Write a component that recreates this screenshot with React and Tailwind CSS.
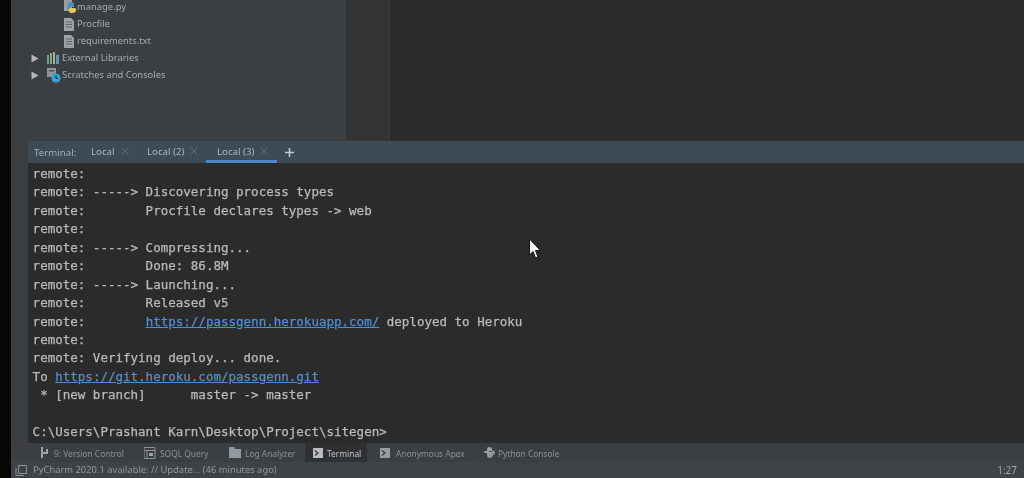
import React from "react";

const PyIcon = () => (
  <svg width="14" height="14" viewBox="0 0 14 14" className="shrink-0">
    <rect x="1" y="0" width="8" height="11" fill="#9a9fa3" />
    <path d="M5 4 Q5 2 8 2 Q11 2 11 4 V7 H7 V8 H11 Q13 8 13 10 Q13 13 9 13 Q6 13 6 11 V9 H4 Z" fill="#4b8fc4" />
    <path d="M7 8 H12 Q13 8 13 10 Q13 13 9 13 Q6 13 6 11 V9 Z" fill="#e6c84e" />
  </svg>
);
const FileIcon = () => (
  <svg width="10" height="13" viewBox="0 0 10 13" className="shrink-0">
    <path d="M0 0H7L10 3V13H0Z" fill="#9ea2a5" />
    <path d="M2 4H8M2 6.5H8M2 9H8" stroke="#62676a" strokeWidth="1" />
  </svg>
);
const Arrow = () => (
  <svg width="8" height="9" viewBox="0 0 8 9" className="shrink-0">
    <path d="M0.5 0.5L7.5 4.5L0.5 8.5Z" fill="#b4b8ba" />
  </svg>
);
const LibIcon = () => (
  <svg width="13" height="12" viewBox="0 0 13 12" className="shrink-0">
    <rect x="0" y="3" width="2" height="9" fill="#6f9aa8" />
    <rect x="3" y="1" width="2" height="11" fill="#7fb069" />
    <rect x="6" y="0" width="2" height="12" fill="#9fb0a0" />
    <rect x="9" y="3" width="3" height="9" fill="#5d95b8" />
  </svg>
);
const ScratchIcon = () => (
  <svg width="14" height="15" viewBox="0 0 14 15" className="shrink-0">
    <rect x="0" y="0" width="9" height="9" fill="#8f9498" />
    <rect x="2" y="2" width="5" height="1.5" fill="#4b5054" />
    <circle cx="9" cy="10" r="4.6" fill="#2fa3d6" />
    <path d="M9 7.5V10.5H11" stroke="#123" strokeWidth="1" fill="none" />
  </svg>
);
const Close = () => (
  <svg width="8" height="8" viewBox="0 0 8 8" className="shrink-0">
    <path d="M0.5 0.5L7.5 7.5M7.5 0.5L0.5 7.5" stroke="#5f6a72" strokeWidth="1" />
  </svg>
);
const Plus = () => (
  <svg width="9" height="9" viewBox="0 0 9 9">
    <path d="M4.5 0V9M0 4.5H9" stroke="#c4c8cb" strokeWidth="1.6" />
  </svg>
);
const Branch = () => (
  <svg width="11" height="11" viewBox="0 0 11 11" className="shrink-0">
    <path d="M2 0V11M2 6H7V2" stroke="#a0a4a7" strokeWidth="2" fill="none" />
  </svg>
);
const Soql = () => (
  <svg width="12" height="12" viewBox="0 0 12 12" className="shrink-0">
    <path d="M0 0.5H11V11.5H0ZM0 3.5H11M3 3.5V11.5" stroke="#8e9396" fill="none" />
    <path d="M5 6H9V9H5Z" fill="#8fa9bb" />
  </svg>
);
const Folder = () => (
  <svg width="12" height="11" viewBox="0 0 12 11" className="shrink-0">
    <path d="M0 0H5L6 2H12V11H0Z" fill="#8f9aa3" />
  </svg>
);
const Term = ({ bright }) => (
  <svg width="10" height="10" viewBox="0 0 10 10" className="shrink-0">
    <rect width="10" height="10" fill={bright ? "#b8bcbe" : "#9a9ea1"} />
    <path d="M2 2.5L5 5L2 7.5" stroke="#333" strokeWidth="1.2" fill="none" />
  </svg>
);
const Snake = () => (
  <svg width="11" height="11" viewBox="0 0 11 11" className="shrink-0">
    <path d="M3 4V2Q3 0 5.5 0Q8 0 8 2V4H5V5H8V8H3V6H1Q0 6 0 4.5Q0 4 1 4Z" fill="#9aa0a4" />
    <path d="M8 3.5H10Q11 4 11 6Q11 7.5 9 7.5V9Q8 11 5.5 11Q3 11 3 9V7.5H8Z" fill="#8b9196" />
  </svg>
);

const Tab = ({ label, active, w }) => (
  <div className={`flex items-center gap-[6px] h-full pl-[11px] border-b-[3px] ${active ? "border-[#4a88c7]" : "border-transparent"} ${w}`}>
    <span className="text-[9.7px] text-[#b0b5b8] pt-[4px]">{label}</span>
    <Close />
  </div>
);

const Tool = ({ icon, label, active, w, pad, gap }) => (
  <div className={`flex items-center h-full ${pad} ${gap} ${w} ${active ? "bg-[#2e3031] text-[#c4c6c8]" : "text-[#8d9194]"}`}>
    {icon}
    <span className="text-[8.4px] whitespace-nowrap pt-[3px]">{label}</span>
  </div>
);

const lines = [
  "remote:",
  "remote: -----> Discovering process types",
  "remote:        Procfile declares types -> web",
  "remote:",
  "remote: -----> Compressing...",
  "remote:        Done: 86.8M",
  "remote: -----> Launching...",
  "remote:        Released v5",
  <>remote:        <span className="text-[#4f8fd6] underline">https://passgenn.herokuapp.com/</span> deployed to Heroku</>,
  "remote:",
  "remote: Verifying deploy... done.",
  <>To <span className="text-[#4f8fd6] underline">https://git.heroku.com/passgenn.git</span></>,
  " * [new branch]      master -> master",
  " ",
  "C:\\Users\\Prashant Karn\\Desktop\\Project\\sitegen>",
];

export default function App() {
  return (
    <div className="flex w-[1024px] h-[478px] overflow-hidden bg-[#060606] font-['Noto_Sans','Open_Sans',sans-serif] blur-[0.5px]">
      <div className="w-[11px] shrink-0" />
      <div className="flex-1 flex flex-col min-w-0">
        <div className="flex h-[141px] shrink-0">
          <div className="w-[17px] bg-[#3b3e40]" />
          <div className="w-[318px] bg-[#3c3f41] flex flex-col text-[9.4px] text-[#a6aaad] relative">
            <div className="flex items-center h-[17px] pl-[35px] -mt-[1.5px]"><PyIcon /><span>manage.py</span></div>
            <div className="flex items-center gap-[3px] h-[17px] pl-[36px]"><FileIcon /><span>Procfile</span></div>
            <div className="flex items-center gap-[3px] h-[17px] pl-[36px]"><FileIcon /><span>requirements.txt</span></div>
            <div className="flex items-center h-[17px] pl-[3px] gap-[8px]"><Arrow /><LibIcon /><span className="-ml-[7px] pl-[1px]">External Libraries</span></div>
            <div className="flex items-center h-[17px] pl-[3px] gap-[8px]"><Arrow /><ScratchIcon /><span className="-ml-[8px] pl-[1px]">Scratches and Consoles</span></div>
          </div>
          <div className="w-[44px] bg-[#323436] border-r border-[#3a3c3e]" />
          <div className="flex-1 bg-[#2b2b2b]" />
        </div>
        <div className="flex flex-1 min-h-0">
          <div className="w-[17px] bg-[#3b3e40] shrink-0" />
          <div className="flex-1 flex flex-col min-w-0">
            <div className="h-[22px] shrink-0 bg-[#3d4b56] flex items-center pl-[6px]">
              <span className="text-[9.7px] text-[#a9aeb1] w-[46px] pt-[2px]">Terminal:</span>
              <Tab label="Local" w="w-[56px]" />
              <Tab label="Local (2)" w="w-[70px]" />
              <Tab label="Local (3)" active w="w-[71px]" />
              <div className="ml-[8px] flex items-center"><Plus /></div>
            </div>
            <div className="h-[280px] shrink-0 bg-[#2b2b2b] pl-[4.6px] pt-[2px] font-['DejaVu_Sans_Mono',monospace] text-[12.52px] leading-[18.45px] text-[#b9bbbb] [-webkit-text-stroke:0.25px] whitespace-pre">
              {lines.map((l, i) => (
                <div key={i} className="h-[18.45px]">{l}</div>
              ))}
            </div>
          </div>
        </div>
        <div className="h-[19px] shrink-0 bg-[#3c3f41] flex items-center pl-[24px]">
          <Tool icon={<Branch />} label="9: Version Control" w="w-[104px]" pad="pl-[5px]" gap="gap-[3px]" />
          <Tool icon={<Soql />} label="SOQL Query" w="w-[85px]" pad="pl-[5px]" gap="gap-[4px]" />
          <Tool icon={<Folder />} label="Log Analyzer" w="w-[81px]" pad="pl-[5px]" gap="gap-[4px]" />
          <Tool icon={<Term bright />} label="Terminal" active w="w-[62px]" pad="pl-[8px]" gap="gap-[4px]" />
          <div className="w-[8px]" />
          <Tool icon={<Term />} label="Anonymous Apex" w="w-[104px]" pad="pl-[5px]" gap="gap-[6px]" />
          <Tool icon={<Snake />} label="Python Console" w="w-[90px]" pad="pl-[5px]" gap="gap-[3px]" />
        </div>
        <div className="h-[16px] shrink-0 bg-[#3d4346] flex items-center pl-[4px] pr-[7px] text-[9.4px] text-[#94989b]">
          <svg width="12" height="11" viewBox="0 0 12 11" className="shrink-0 mr-[6px]">
            <path d="M3.5 0.5H11.5V8.5H3.5Z M1 3V10.5H9" stroke="#8f9396" fill="none" />
          </svg>
          <span className="pt-[1px]">PyCharm 2020.1 available: // Update... (46 minutes ago)</span>
          <span className="ml-auto text-[10px] text-[#a4a8aa] pt-[1px]">1:27</span>
        </div>
      </div>
      <svg width="14" height="22" viewBox="0 0 14 22" className="absolute left-[528px] top-[238px]">
        <path d="M1.5 1V17L5 13.5L7.5 20L10 19L7.5 12.5H12.5Z" fill="#f4f4f4" stroke="#111" strokeWidth="1" />
      </svg>
    </div>
  );
}
